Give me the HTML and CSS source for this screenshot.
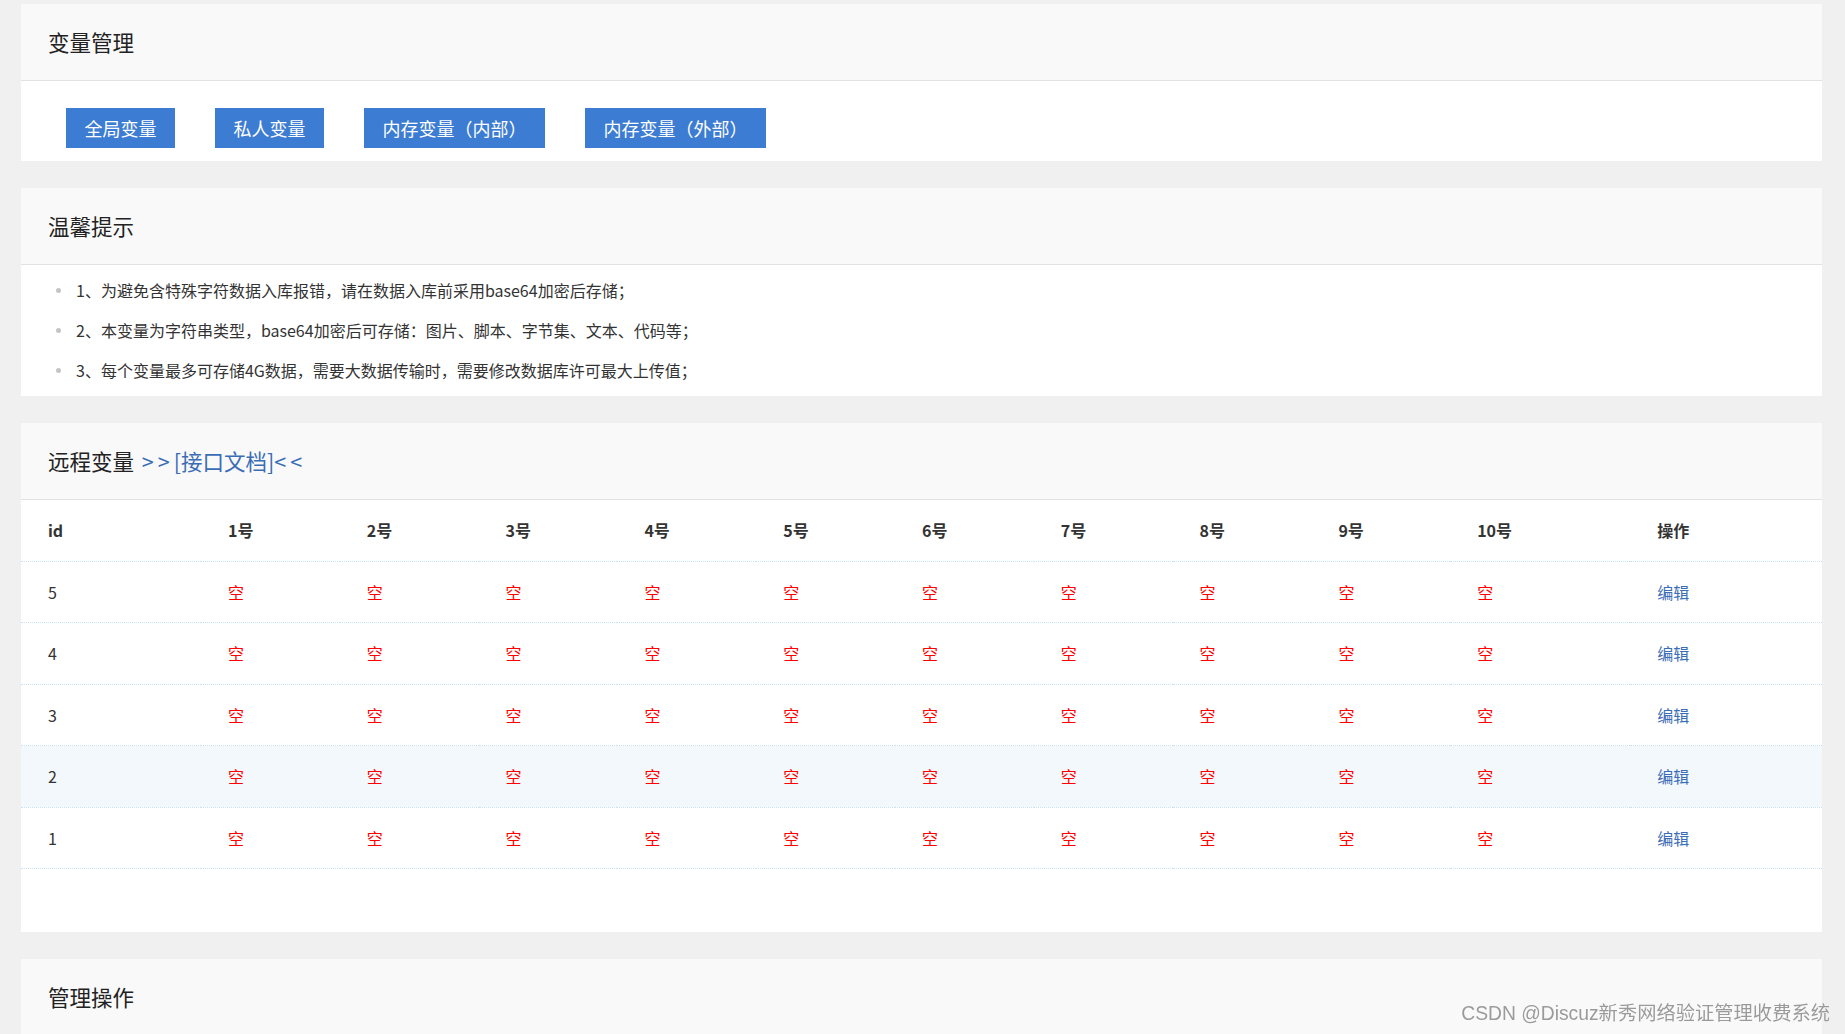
FILE: index.html
```html
<!DOCTYPE html>
<html lang="zh-CN">
<head>
<meta charset="utf-8">
<title>变量管理</title>
<link rel="stylesheet" href="styles.css">
</head>
<body>
<div class="page">
  <section class="card">
    <div class="card-header">变量管理</div>
    <div class="card-body btn-row">
      <a class="btn">全局变量</a>
      <a class="btn">私人变量</a>
      <a class="btn">内存变量（内部）</a>
      <a class="btn">内存变量（外部）</a>
    </div>
  </section>

  <section class="card">
    <div class="card-header">温馨提示</div>
    <ul class="tips">
      <li>1、为避免含特殊字符数据入库报错，请在数据入库前采用base64加密后存储；</li>
      <li>2、本变量为字符串类型，base64加密后可存储：图片、脚本、字节集、文本、代码等；</li>
      <li>3、每个变量最多可存储4G数据，需要大数据传输时，需要修改数据库许可最大上传值；</li>
    </ul>
  </section>

  <section class="card">
    <div class="card-header">远程变量 <a class="doc-link"><span class="ang">&gt;&gt;</span>[接口文档]<span class="ang">&lt;&lt;</span></a></div>
    <div class="table-wrap">
      <table class="vars">
        <colgroup>
          <col class="c-id"><col class="c-n"><col class="c-n"><col class="c-n"><col class="c-n"><col class="c-n"><col class="c-n"><col class="c-n"><col class="c-n"><col class="c-n"><col class="c-ten"><col class="c-op">
        </colgroup>
        <thead>
          <tr><th>id</th><th>1号</th><th>2号</th><th>3号</th><th>4号</th><th>5号</th><th>6号</th><th>7号</th><th>8号</th><th>9号</th><th>10号</th><th>操作</th></tr>
        </thead>
        <tbody>
          <tr><td>5</td><td class="empty">空</td><td class="empty">空</td><td class="empty">空</td><td class="empty">空</td><td class="empty">空</td><td class="empty">空</td><td class="empty">空</td><td class="empty">空</td><td class="empty">空</td><td class="empty">空</td><td><a class="edit">编辑</a></td></tr>
          <tr><td>4</td><td class="empty">空</td><td class="empty">空</td><td class="empty">空</td><td class="empty">空</td><td class="empty">空</td><td class="empty">空</td><td class="empty">空</td><td class="empty">空</td><td class="empty">空</td><td class="empty">空</td><td><a class="edit">编辑</a></td></tr>
          <tr><td>3</td><td class="empty">空</td><td class="empty">空</td><td class="empty">空</td><td class="empty">空</td><td class="empty">空</td><td class="empty">空</td><td class="empty">空</td><td class="empty">空</td><td class="empty">空</td><td class="empty">空</td><td><a class="edit">编辑</a></td></tr>
          <tr class="hover"><td>2</td><td class="empty">空</td><td class="empty">空</td><td class="empty">空</td><td class="empty">空</td><td class="empty">空</td><td class="empty">空</td><td class="empty">空</td><td class="empty">空</td><td class="empty">空</td><td class="empty">空</td><td><a class="edit">编辑</a></td></tr>
          <tr><td>1</td><td class="empty">空</td><td class="empty">空</td><td class="empty">空</td><td class="empty">空</td><td class="empty">空</td><td class="empty">空</td><td class="empty">空</td><td class="empty">空</td><td class="empty">空</td><td class="empty">空</td><td><a class="edit">编辑</a></td></tr>
        </tbody>
      </table>
    </div>
  </section>

  <section class="card">
    <div class="card-header">管理操作</div>
    <div class="card-body tall"></div>
  </section>
</div>
<div class="watermark">CSDN @Discuz新秀网络验证管理收费系统</div>
</body>
</html>
```

FILE: styles.css
```css
html, body {
  margin: 0;
  padding: 0;
}
body {
  background: #f0f0f0;
  font-family: "Noto Sans CJK SC", "Noto Sans", sans-serif;
  color: #333;
  overflow: hidden;
}
.page {
  padding: 4px 23px 0 21px;
  display: flex;
  flex-direction: column;
  gap: 27px;
}
.card {
  background: #fff;
}
.card-header {
  height: 76px;
  line-height: 76px;
  padding-left: 27px;
  background: #f9f9f9;
  border-bottom: 1px solid #e2e2e2;
  font-size: 21.5px;
  color: #222;
  white-space: nowrap;
}
.doc-link {
  color: #3b6db5;
  text-decoration: none;
  margin-left: 3px;
}
.ang {
  letter-spacing: 4px;
}
.btn-row {
  display: flex;
  gap: 40px;
  padding: 27px 0 13px 45px;
}
.btn {
  display: block;
  height: 40px;
  line-height: 40px;
  padding: 0 18.5px;
  background: #3c7cd3;
  color: #fff;
  font-size: 18px;
  text-decoration: none;
  white-space: nowrap;
}
.tips {
  list-style: none;
  margin: 0;
  padding: 5px 0 5.5px 35px;
}
.tips li {
  display: flex;
  align-items: center;
  height: 40px;
  font-size: 16px;
  color: #333;
}
.tips li::before {
  content: "";
  width: 5px;
  height: 5px;
  border-radius: 50%;
  background: #c4c4c4;
  margin-right: 15px;
  flex: none;
}
.table-wrap {
  padding-bottom: 63px;
}
.vars {
  width: 100%;
  border-collapse: collapse;
  table-layout: fixed;
  font-size: 16px;
}
.c-id { width: 180px; }
.c-n { width: 138.8px; }
.c-ten { width: 180px; }
.c-op { width: auto; }
.vars th,
.vars td {
  text-align: left;
  padding: 0 0 0 27px;
  border-bottom: 1px dotted #c6e2f8;
  white-space: nowrap;
}
.vars th {
  height: 61px;
  font-weight: bold;
  color: #333;
}
.vars td {
  height: 60.5px;
  color: #333;
}
.vars tr.hover td {
  background: #f3f8fd;
}
.vars td.empty {
  color: #ff0000;
}
.edit {
  color: #3b6db5;
  text-decoration: none;
}
.tall {
  height: 200px;
}
.watermark {
  position: fixed;
  right: 15px;
  bottom: 8px;
  line-height: 24px;
  font-size: 19.3px;
  font-family: "Liberation Sans", "Noto Sans CJK SC", sans-serif;
  color: #9a9a9a;
  text-shadow: 0 0 1px #fff;
  white-space: nowrap;
}
```
